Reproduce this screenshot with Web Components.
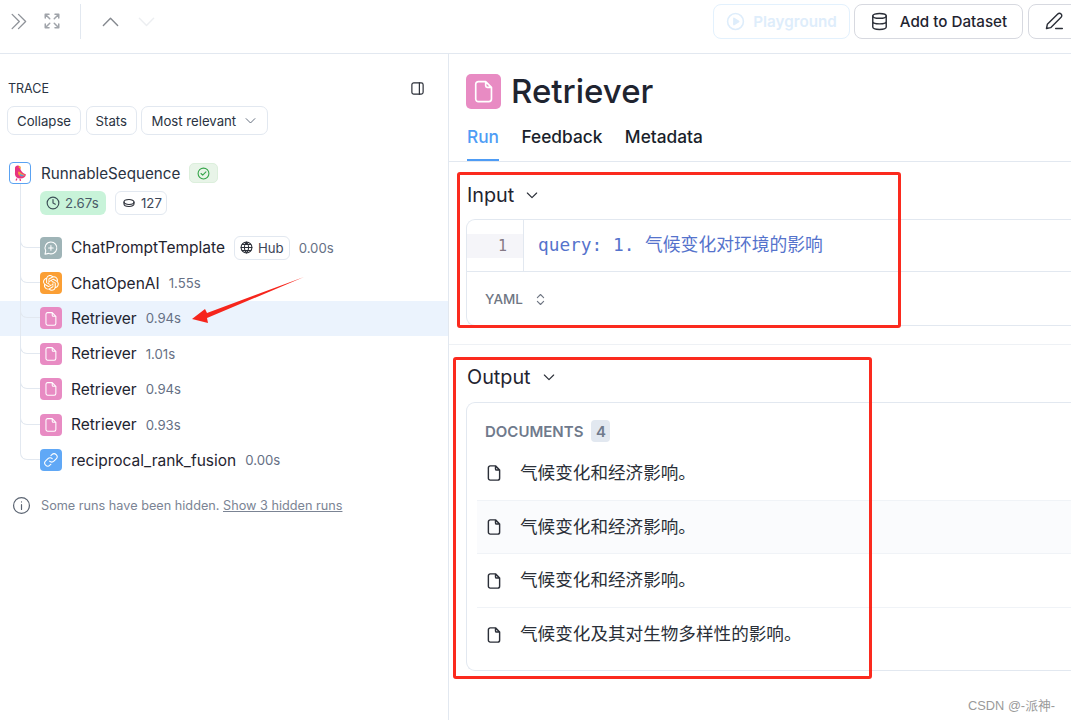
<!DOCTYPE html>
<html lang="zh">
<head>
<meta charset="utf-8">
<title>Trace</title>
<style>
  html, body { margin: 0; height: 720px; overflow: hidden; background: #fff; }
  body { font-family: Inter, "Noto Sans CJK SC", sans-serif; color: #1f2430; }
</style>
</head>
<body>
<trace-app></trace-app>

<script>
const FILE_PATH = "M14 2.5H7A2.5 2.5 0 0 0 4.5 5v14A2.5 2.5 0 0 0 7 21.5h10a2.5 2.5 0 0 0 2.5-2.5V8L14 2.5zM14 2.5V6.5a1.5 1.5 0 0 0 1.5 1.5h4";
const OPENAI_PATH = "M22.2819 9.8211a5.9847 5.9847 0 0 0-.5157-4.9108 6.0462 6.0462 0 0 0-6.5098-2.9A6.0651 6.0651 0 0 0 4.9807 4.1818a5.9847 5.9847 0 0 0-3.9977 2.9 6.0462 6.0462 0 0 0 .7427 7.0966 5.98 5.98 0 0 0 .511 4.9107 6.051 6.051 0 0 0 6.5146 2.9001A5.9847 5.9847 0 0 0 13.2599 24a6.0557 6.0557 0 0 0 5.7718-4.2058 5.9894 5.9894 0 0 0 3.9977-2.9001 6.0557 6.0557 0 0 0-.7475-7.0729zm-9.022 12.6081a4.4755 4.4755 0 0 1-2.8764-1.0408l.1419-.0804 4.7783-2.7582a.7948.7948 0 0 0 .3927-.6813v-6.7369l2.02 1.1686a.071.071 0 0 1 .038.052v5.5826a4.504 4.504 0 0 1-4.4945 4.4944zm-9.6607-4.1254a4.4708 4.4708 0 0 1-.5346-3.0137l.142.0852 4.783 2.7582a.7712.7712 0 0 0 .7806 0l5.8428-3.3685v2.3324a.0804.0804 0 0 1-.0332.0615L9.74 19.9502a4.4992 4.4992 0 0 1-6.1408-1.6464zM2.3408 7.8956a4.485 4.485 0 0 1 2.3655-1.9728V11.6a.7664.7664 0 0 0 .3879.6765l5.8144 3.3543-2.0201 1.1685a.0757.0757 0 0 1-.071 0l-4.8303-2.7865A4.504 4.504 0 0 1 2.3408 7.872zm16.5963 3.8558L13.1038 8.364 15.1192 7.2a.0757.0757 0 0 1 .071 0l4.8303 2.7913a4.4944 4.4944 0 0 1-.6765 8.1042v-5.6772a.79.79 0 0 0-.407-.667zm2.0107-3.0231l-.142-.0852-4.7735-2.7818a.7759.7759 0 0 0-.7854 0L9.409 9.2297V6.8974a.0662.0662 0 0 1 .0284-.0615l4.8303-2.7866a4.4992 4.4992 0 0 1 6.6802 4.66zM8.3065 12.863l-2.02-1.1638a.0804.0804 0 0 1-.038-.0567V6.0742a4.4992 4.4992 0 0 1 7.3757-3.4537l-.142.0805L8.704 5.459a.7948.7948 0 0 0-.3927.6813zm1.0976-2.3654l2.602-1.4998 2.6069 1.4998v2.9994l-2.5974 1.4997-2.6067-1.4997Z";

function icon(paths, size, color, width = 2) {
  return `<svg width="${size}" height="${size}" viewBox="0 0 24 24" fill="none" stroke="${color}" stroke-width="${width}" stroke-linecap="round" stroke-linejoin="round" style="display:block;flex:none">${paths}</svg>`;
}

const ICONS = {
  file: `<path d="${FILE_PATH}"/>`,
  chevronDown: `<path d="M5 9l7 7 7-7"/>`,
  chevronUp: `<path d="M3 17l9-9 9 9"/>`,
  chevronLow: `<path d="M3 8l9 9 9-9"/>`,
  chevrons: `<path d="M4 3l9 9-9 9M12 3l9 9-9 9"/>`,
  expand: `<path d="M3 8V3h5M3 3l6 6M21 8V3h-5M21 3l-6 6M3 16v5h5M3 21l6-6M21 16v5h-5M21 21l-6-6"/>`,
  panel: `<rect x="3" y="3" width="18" height="18" rx="3"/><path d="M15 3v18"/>`,
  clock: `<circle cx="12" cy="12" r="10"/><path d="M12 6v6l4 2"/>`,
  check: `<circle cx="12" cy="12" r="10"/><path d="M7.5 12l3 3 6-6"/>`,
  coin: `<ellipse cx="12" cy="10" rx="10" ry="5"/><path d="M2 10v4c0 2.8 4.5 5 10 5s10-2.2 10-5v-4"/>`,
  globe: `<circle cx="12" cy="12" r="10"/><path d="M2 12h20M12 2c3 3 4 6.500 4 10s-1 7-4 10c-3-3-4-6.500-4-10s1-7 4-10zM4 6.500h16M4 17.500h16"/>`,
  info: `<circle cx="12" cy="12" r="10"/><path d="M12 11v6M12 7.500h.01"/>`,
  chat: `<path d="M12 3a9 9 0 1 1-3.500 17.300L3 21.500l1.200-5A9 9 0 0 1 12 3zM12 8.500v7M8.500 12h7"/>`,
  link: `<path d="M10 14a4.500 4.500 0 0 0 6.500 0l3.500-3.500a4.500 4.500 0 0 0-6.500-6.500L12 5.500M14 10a4.500 4.500 0 0 0-6.500 0L4 13.500a4.500 4.500 0 0 0 6.500 6.500l1.500-1.500"/>`,
  play: `<circle cx="12" cy="12" r="10"/><path d="M10 8l6 4-6 4z" fill="currentColor"/>`,
  database: `<ellipse cx="12" cy="5" rx="8.500" ry="3"/><path d="M3.500 5v14c0 1.700 3.800 3 8.500 3s8.500-1.300 8.500-3V5M3.500 12c0 1.700 3.800 3 8.500 3s8.500-1.300 8.500-3"/>`,
  pen: `<path d="M3 21l1-5L16.500 3.500a2.500 2.500 0 0 1 4 4L8 20l-5 1zM14 21h8"/>`,
  updown: `<path d="M7 9l5-5 5 5M7 15l5 5 5-5"/>`
};

class RunIcon extends HTMLElement {
  connectedCallback() {
    const kind = this.getAttribute("kind");
    const size = Number(this.getAttribute("size") || 22);
    const glyph = size * 0.72;
    const colors = { file: "#e88bc3", chat: "#9fb4b7", openai: "#fb9f34", link: "#60a8f6" };
    let inner = "";
    if (kind === "openai") {
      inner = `<svg width="${glyph}" height="${glyph}" viewBox="0 0 24 24" fill="#fff" style="display:block"><path d="${OPENAI_PATH}"/></svg>`;
    } else if (kind === "parrot") {
      inner = `<svg width="15" height="16" viewBox="0 0 15 16" style="display:block">
        <path d="M2 3C2 1 4.500 0 6 1c1.500 1 1 3 2 4.500C9 7.500 11 8.500 13 9.500c-.5 3-3.500 4.500-6.500 4-3.500-.6-5-3-4.500-6z" fill="#e8337f"/>
        <path d="M6 .8C7.800 1 8.300 2.500 7.500 4L5.500 2.500z" fill="#f9a03c"/>
        <path d="M5.500 6.500c1.500 0 3 2.500 6.500 3.500-.8 1.500-3.800 2-5.200.8C5 9.500 4.500 7 5.500 6.500z" fill="#f9a03c"/>
        <path d="M7 9c1.200.3 2.500 1 4 1.300-.8 1-2.500 1.200-3.500.6C6.800 10.500 6.500 9.500 7 9z" fill="#4f9ae8"/>
        <path d="M4 13.500l-1 2M7 14l.5 1.800" stroke="#e8337f" stroke-width="1.300" fill="none"/>
      </svg>`;
    } else {
      inner = icon(ICONS[kind], glyph, "#fff", 1.6);
    }
    const plain = kind === "parrot";
    this.attachShadow({ mode: "open" }).innerHTML = `
      <style>
        :host {
          display: flex;
          flex: none;
          align-items: center;
          justify-content: center;
          box-sizing: border-box;
          width: ${size}px;
          height: ${size}px;
          border-radius: ${size > 30 ? 5 : 4}px;
          background: ${plain ? "#fff" : colors[kind]};
          ${plain ? "border: 1px solid #5aa2f2;" : ""}
        }
      </style>${inner}`;
  }
}

class ToolButton extends HTMLElement {
  constructor() {
    super();
    this.attachShadow({ mode: "open" }).innerHTML = `
      <style>
        :host {
          display: inline-flex;
          flex: none;
          align-items: center;
          box-sizing: border-box;
          height: 29px;
          padding: 0 9px;
          gap: 7px;
          border: 1px solid #e2e8f0;
          border-radius: 7px;
          background: #fff;
          font-size: 13.200px;
          color: #2a3342;
          white-space: nowrap;
        }
      </style>
      <slot></slot>`;
  }
}

class TopBar extends HTMLElement {
  constructor() {
    super();
    this.attachShadow({ mode: "open" }).innerHTML = `
      <style>
        :host {
          display: flex;
          align-items: center;
          box-sizing: border-box;
          height: 54px;
          padding: 0 0 11px 9px;
          border-bottom: 1px solid #e2e8f0;
          overflow: hidden;
        }
        .left { display: flex; align-items: center; flex: none; width: 154px; }
        .rule { width: 1px; height: 35px; background: #e2e8f0; margin: 0 20px 0 19px; }
        .right { margin-left: auto; display: flex; gap: 4px; margin-right: -11px; flex: none; }
        .btn {
          display: flex; align-items: center; justify-content: center;
          box-sizing: border-box; height: 35px;
          border: 1px solid #d7d9e0; border-radius: 8px;
          font-size: 15.200px; font-weight: 500; color: #1f2430; white-space: nowrap;
        }
        .play { width: 137px; gap: 8px; border-color: #e3f1fd; color: #deedfb; font-weight: 600; }
        .add { width: 169px; gap: 11px; }
        .edit { width: 54px; margin-left: 1px; justify-content: flex-start; padding-left: 15px; }
      </style>
      <div class="left">
        ${icon(ICONS.chevrons, 19, "#8f9399", 1.7)}
        <span style="width:15px"></span>
        ${icon(ICONS.expand, 18, "#a0a4aa", 2)}
        <div class="rule"></div>
        ${icon(ICONS.chevronUp, 19, "#85898f", 1.8)}
        <span style="width:17px"></span>
        ${icon(ICONS.chevronLow, 19, "#eceef1", 1.8)}
      </div>
      <div class="right">
        <div class="btn play">${icon(ICONS.play, 19, "#deedfb", 2)}<span>Playground</span></div>
        <div class="btn add">${icon(ICONS.database, 19, "#2b2f38", 1.8)}<span>Add to Dataset</span></div>
        <div class="btn edit">${icon(ICONS.pen, 20, "#2b2f38", 1.7)}</div>
      </div>`;
  }
}

class RunRow extends HTMLElement {
  connectedCallback() {
    const active = this.hasAttribute("active");
    const hub = this.hasAttribute("hub");
    const last = this.hasAttribute("last");
    this.attachShadow({ mode: "open" }).innerHTML = `
      <style>
        :host {
          display: flex;
          align-items: center;
          position: relative;
          box-sizing: border-box;
          height: 35.400px;
          padding-left: 40px;
          background: ${active ? "#ebf3fd" : "transparent"};
        }
        .line {
          position: absolute; left: 20px; top: 0; width: 20px;
          height: 50%;
          border-left: 1px solid #e2e8f0; border-bottom: 1px solid #e2e8f0;
          border-bottom-left-radius: 7px;
          box-sizing: border-box;
        }
        .through {
          position: absolute; left: 20px; top: 0; bottom: 0;
          border-left: 1px solid #e2e8f0;
          display: ${last ? "none" : "block"};
        }
        .name { margin-left: 9px; font-size: 15.500px; color: #1f2430; white-space: nowrap; }
        .time { margin-left: 9px; font-size: 13.200px; color: #667085; }
        .hub {
          display: inline-flex; align-items: center; gap: 5px;
          box-sizing: border-box; height: 24px; padding: 0 5px;
          margin-left: 9px;
          border: 1px solid #e2e8f0; border-radius: 6px;
          font-size: 13.200px; color: #3c4657;
        }
      </style>
      <div class="through"></div>
      <div class="line"></div>
      <run-icon kind="${this.getAttribute("kind")}"></run-icon>
      <span class="name">${this.getAttribute("name")}</span>
      ${hub ? `<span class="hub">${icon(ICONS.globe, 13, "#2b2f38", 2)}Hub</span>` : ""}
      <span class="time">${this.getAttribute("time")}</span>`;
  }
}

class TracePanel extends HTMLElement {
  constructor() {
    super();
    this.attachShadow({ mode: "open" }).innerHTML = `
      <style>
        :host {
          display: block;
          flex: none;
          box-sizing: border-box;
          width: 449px;
          height: 666px;
          border-right: 1px solid #e2e8f0;
        }
        .head {
          display: flex; justify-content: space-between; align-items: center;
          padding: 26px 23px 0 8px; height: 17px;
          font-size: 12.500px; color: #2a3342;
        }
        .tools { display: flex; gap: 4.500px; padding: 9px 0 0 7px; }
        .root { display: flex; align-items: center; gap: 10px; padding: 27px 0 0 9px; height: 22px; position: relative; }
        .root-name { font-size: 15.200px; color: #2a3342; }
        .ok {
          display: flex; align-items: center; justify-content: center;
          width: 29px; height: 20px; margin-left: -1px;
          box-sizing: border-box; border: 1px solid #dcefdc; border-radius: 5px; background: #e8f4e8;
        }
        .stats { display: flex; gap: 9px; padding: 7px 0 0 40px; height: 24px; position: relative; }
        .stats::before {
          content: ""; position: absolute; left: 20px; top: 0; bottom: -16px;
          border-left: 1px solid #e2e8f0;
        }
        .stat {
          display: inline-flex; align-items: center; gap: 5px;
          box-sizing: border-box; height: 24px;
          border-radius: 6px; font-size: 13.200px; padding: 0 6px;
        }
        .time { background: #c8f3d9; color: #4a5a68; width: 66px; }
        .tokens { border: 1px solid #e2e8f0; color: #3c4657; width: 52px; gap: 6px; padding: 0 7px; }
        .runs { margin-top: 15px; }
        .hidden {
          display: flex; align-items: center; gap: 10px;
          padding: 18px 0 0 12px;
          font-size: 12.700px; color: #7b8494;
        }
        a { color: inherit; text-decoration: underline; }
      </style>
      <div class="head"><span>TRACE</span>${icon(ICONS.panel, 15, "#2b2f38", 1.9)}</div>
      <div class="tools">
        <tool-button>Collapse</tool-button>
        <tool-button>Stats</tool-button>
        <tool-button>Most relevant ${icon(ICONS.chevronDown, 15, "#5c6677", 1.5)}</tool-button>
      </div>
      <div class="root">
        <run-icon kind="parrot"></run-icon>
        <span class="root-name">RunnableSequence</span>
        <span class="ok">${icon(ICONS.check, 13, "#35a54a", 2)}</span>
      </div>
      <div class="stats">
        <span class="stat time">${icon(ICONS.clock, 14, "#3c5058", 2)}2.67s</span>
        <span class="stat tokens">${icon(ICONS.coin, 12, "#2b2f38", 2.200)}127</span>
      </div>
      <div class="runs">
        <run-row kind="chat" name="ChatPromptTemplate" time="0.00s" hub></run-row>
        <run-row kind="openai" name="ChatOpenAI" time="1.55s"></run-row>
        <run-row kind="file" name="Retriever" time="0.94s" active></run-row>
        <run-row kind="file" name="Retriever" time="1.01s"></run-row>
        <run-row kind="file" name="Retriever" time="0.94s"></run-row>
        <run-row kind="file" name="Retriever" time="0.93s"></run-row>
        <run-row kind="link" name="reciprocal_rank_fusion" time="0.00s" last></run-row>
      </div>
      <div class="hidden">
        ${icon(ICONS.info, 19, "#5b6472", 1.5)}
        <span>Some runs have been hidden. <a>Show 3 hidden runs</a></span>
      </div>`;
  }
}

class SectionHead extends HTMLElement {
  constructor() {
    super();
    this.attachShadow({ mode: "open" }).innerHTML = `
      <style>
        :host {
          display: flex; align-items: center; gap: 10px;
          font-size: 19.800px; color: #1f2430;
          height: 24px;
        }
      </style>
      <slot></slot>${icon(ICONS.chevronDown, 16, "#2b2f38", 1.7)}`;
  }
}

class DocRow extends HTMLElement {
  constructor() {
    super();
    this.attachShadow({ mode: "open" }).innerHTML = `
      <style>
        :host {
          display: flex; align-items: center; gap: 17px;
          box-sizing: border-box;
          height: 53.700px;
          padding-left: 8px;
          font-size: 17.600px; color: #2a2f38;
          border-bottom: 1px solid #f0f3f7;
        }
        :host([shade]) { background: #fafbfd; }
        :host([last]) { border-bottom: 0; }
        .txt { display: block; margin-top: -4px; }
      </style>
      ${icon(ICONS.file, 18, "#2b2f38", 1.9)}
      <span class="txt"><slot></slot></span>`;
  }
}

class RunDetail extends HTMLElement {
  constructor() {
    super();
    this.attachShadow({ mode: "open" }).innerHTML = `
      <style>
        :host { display: block; flex: 1; min-width: 0; height: 666px; overflow: hidden; }
        .title { display: flex; align-items: center; gap: 10px; padding: 19px 0 0 17px; height: 37px; }
        h1 { margin: 0; font-size: 33px; font-weight: 500; color: #1f2430; line-height: 37px; }
        .tabs {
          display: flex; gap: 22.500px; padding: 0 0 0 18px; margin-top: 12px;
          height: 39px; border-bottom: 1px solid #e2e8f0;
          font-size: 17.300px; font-weight: 500; color: #1a1f2b;
        }
        .tab { padding-top: 4px; height: 33px; }
        .tab.on { color: #4e9cf5; border-bottom: 2px solid #4e9cf5; }
        .sec { padding: 21px 0 0 18px; }
        .sec.out { padding-top: 20px; }
        .code {
          margin: 12px 0 0 -1px; height: 107px; box-sizing: border-box;
          border: 1px solid #e2e8f0; border-right: 0; border-radius: 9px 0 0 9px;
        }
        .editor { display: flex; height: 51px; border-bottom: 1px solid #e2e8f0; }
        .gutter { width: 57px; border-right: 1px solid #e2e8f0; padding-top: 14px; box-sizing: border-box; flex: none; }
        .num {
          height: 24px; line-height: 24px; background: #f5f5f9;
          text-align: right; padding-right: 16px; box-sizing: border-box;
          font: 15px/24px "DejaVu Sans Mono", monospace; color: #857a85;
        }
        .line {
          padding: 13px 0 0 14px;
          font: 17.800px/24px "DejaVu Sans Mono", "Noto Sans CJK SC", monospace;
          color: #5573cc; white-space: nowrap;
        }
        .foot {
          display: flex; align-items: center; gap: 10px;
          height: 54px; padding-left: 18px;
          font-size: 13.500px; font-weight: 500; color: #6f7683;
        }
        .split { height: 0; border-top: 1px solid #eef1f5; margin-top: 18px; }
        .docs {
          margin: 13px 0 0 -1px; height: 269px; box-sizing: border-box;
          border: 1px solid #e2e8f0; border-right: 0; border-radius: 9px 0 0 9px;
          padding: 17px 0 0 10px;
        }
        .label {
          display: flex; align-items: center; gap: 8px; padding-left: 8px;
          height: 22px; font-size: 15px; font-weight: 600; color: #6f7a8c;
        }
        .count {
          display: inline-flex; align-items: center; justify-content: center;
          width: 19px; height: 22px; background: #e2e8f0; border-radius: 4px;
          font-size: 15px; color: #6f7a8c;
        }
        .rows { margin-top: 5px; }
      </style>
      <div class="title">
        <run-icon kind="file" size="35"></run-icon>
        <h1>Retriever</h1>
      </div>
      <div class="tabs">
        <div class="tab on">Run</div>
        <div class="tab">Feedback</div>
        <div class="tab">Metadata</div>
      </div>
      <div class="sec">
        <section-head>Input</section-head>
        <div class="code">
          <div class="editor">
            <div class="gutter"><div class="num">1</div></div>
            <div class="line">query: 1. 气候变化对环境的影响</div>
          </div>
          <div class="foot">YAML ${icon(ICONS.updown, 15, "#6f7683", 1.8)}</div>
        </div>
      </div>
      <div class="split"></div>
      <div class="sec out">
        <section-head>Output</section-head>
        <div class="docs">
          <div class="label">DOCUMENTS <span class="count">4</span></div>
          <div class="rows">
            <doc-row>气候变化和经济影响。</doc-row>
            <doc-row shade>气候变化和经济影响。</doc-row>
            <doc-row>气候变化和经济影响。</doc-row>
            <doc-row last>气候变化及其对生物多样性的影响。</doc-row>
          </div>
        </div>
      </div>`;
  }
}

// red marks drawn over the screenshot, plus the watermark
class Annotations extends HTMLElement {
  constructor() {
    super();
    this.attachShadow({ mode: "open" }).innerHTML = `
      <style>
        :host { position: absolute; inset: 0; display: block; pointer-events: none; }
        .box { position: absolute; box-sizing: border-box; border: 3px solid #fb2a1e; border-radius: 3px; }
        svg { position: absolute; left: 0; top: 0; }
        .mark {
          position: absolute; right: 16px; top: 695px;
          font: 12.800px "Liberation Sans", "Noto Sans CJK SC", sans-serif; color: #9a9a9a;
        }
      </style>
      <div class="box" style="left:457px;top:172px;width:444px;height:156px"></div>
      <div class="box" style="left:453px;top:357px;width:419px;height:322px"></div>
      <svg width="1071" height="720"><path d="M304 277L207 313 205 309 192 319 208 323 207 318Z" fill="#f6251c"/></svg>
      <div class="mark">CSDN @-派神-</div>`;
  }
}

class TraceApp extends HTMLElement {
  constructor() {
    super();
    this.attachShadow({ mode: "open" }).innerHTML = `
      <style>
        :host { display: block; position: relative; height: 720px; overflow: hidden; }
        .main { display: flex; }
      </style>
      <top-bar></top-bar>
      <div class="main">
        <trace-panel></trace-panel>
        <run-detail></run-detail>
      </div>
      <trace-annotations></trace-annotations>`;
  }
}

customElements.define("run-icon", RunIcon);
customElements.define("tool-button", ToolButton);
customElements.define("top-bar", TopBar);
customElements.define("run-row", RunRow);
customElements.define("trace-panel", TracePanel);
customElements.define("section-head", SectionHead);
customElements.define("doc-row", DocRow);
customElements.define("run-detail", RunDetail);
customElements.define("trace-annotations", Annotations);
customElements.define("trace-app", TraceApp);
</script>
</body>
</html>
